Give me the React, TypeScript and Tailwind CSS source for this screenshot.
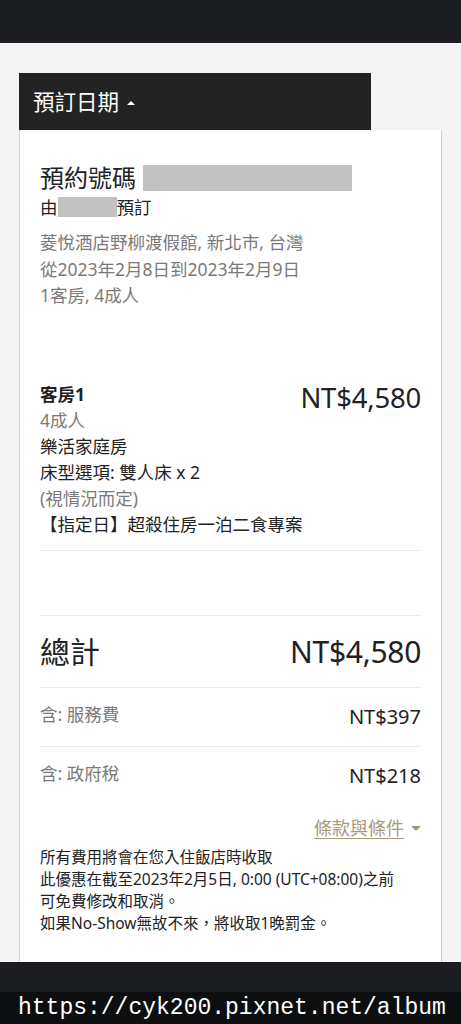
const cjk = { fontFamily: '"Noto Sans", "Noto Sans CJK TC", sans-serif' };

const Redacted = ({ className }: { className: string }) => (
  <span className={`inline-block bg-[#c2c2c2] align-middle ${className}`} />
);

const Divider = () => <div className="h-px bg-[#ececec]" />;

export default function App() {
  return (
    <div className="flex h-[1024px] flex-col overflow-hidden bg-[#f4f4f4]" style={cjk}>
      <div className="h-[43px] shrink-0 bg-[#1b1d20]" />

      <main className="flex-1 overflow-hidden px-[19px] pt-[30px]">
        <div className="flex h-[57px] w-[352px] items-center gap-2 bg-[#232323] pl-[14px] pt-[1px] text-[21.5px] text-white">
          預訂日期
          <span className="mt-[2px] inline-block h-0 w-0 border-x-[4px] border-b-[4px] border-x-transparent border-b-white" />
        </div>

        <section className="h-full border-x border-[#cfcfcf] bg-white px-5 pt-[31px] text-[#222]">
          <div className="flex flex-col">
            <div className="flex items-center gap-[7px] text-[24px] leading-[33px]">
              預約號碼
              <Redacted className="h-[26px] w-[209px]" />
            </div>
            <div className="flex items-center text-[17.5px] leading-[26px]">
              由<Redacted className="h-[20px] w-[59px]" />預訂
            </div>
            <div className="mt-[9px] text-[17.5px] leading-[26.5px] text-[#7a7a7a]">
              <p>菱悅酒店野柳渡假館, 新北市, 台灣</p>
              <p>從2023年2月8日到2023年2月9日</p>
              <p>1客房, 4成人</p>
            </div>
          </div>

          <div className="mt-[72px] flex justify-between">
            <div className="min-w-0 whitespace-nowrap text-[17.5px] leading-[26px]">
              <p className="font-bold">客房1</p>
              <p className="text-[#7a7a7a]">4成人</p>
              <p>樂活家庭房</p>
              <p>床型選項: 雙人床 x 2</p>
              <p className="text-[#7a7a7a]">(視情況而定)</p>
              <p>【指定日】超殺住房一泊二食專案</p>
            </div>
            <p className="mt-[2px] shrink-0 text-[27.5px] leading-[30px] tracking-[-0.2px]">NT$4,580</p>
          </div>

          <div className="mt-[13px]">
            <Divider />
          </div>
          <div className="mt-[64px]">
            <Divider />
          </div>

          <div className="flex h-[71px] items-center justify-between text-[30px]">
            <span>總計</span>
            <span className="tracking-[-0.3px]">NT$4,580</span>
          </div>
          <Divider />
          <div className="flex h-[58px] items-center justify-between">
            <span className="-mt-[4px] text-[17.5px] text-[#7a7a7a]">含: 服務費</span>
            <span className="text-[20px]">NT$397</span>
          </div>
          <Divider />
          <div className="flex h-[58px] items-center justify-between">
            <span className="-mt-[4px] text-[17.5px] text-[#7a7a7a]">含: 政府稅</span>
            <span className="text-[20px]">NT$218</span>
          </div>

          <div className="mt-[10px] flex items-center justify-end gap-[7px]">
            <span className="text-[18px] text-[#a8997a] underline underline-offset-[3px]">條款與條件</span>
            <span className="inline-block h-0 w-0 border-x-[5px] border-t-[5px] border-x-transparent border-t-[#a8997a]" />
          </div>
          <div className="mt-[4px] text-[15.5px] leading-[22.3px]">
            <p>所有費用將會在您入住飯店時收取</p>
            <p>此優惠在截至2023年2月5日, 0:00 (UTC+08:00)之前</p>
            <p>可免費修改和取消。</p>
            <p>如果No-Show無故不來，將收取1晚罰金。</p>
          </div>
        </section>
      </main>

      <div className="h-[30px] shrink-0 bg-[#1b1d20]" />
      <div
        className="flex h-[32px] shrink-0 items-center bg-[#0d0e10] pl-[18px] text-[23px] text-white"
        style={{ fontFamily: '"Liberation Mono", monospace' }}
      >
        https://cyk200.pixnet.net/album
      </div>
    </div>
  );
}
